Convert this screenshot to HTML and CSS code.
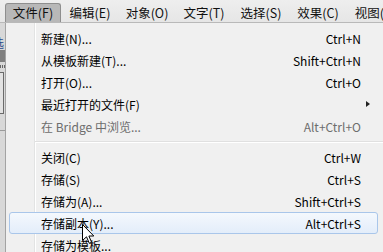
FILE: index.html
```html
<!DOCTYPE html>
<html lang="zh-CN">
<head>
<meta charset="utf-8">
<link rel="stylesheet" href="styles.css">
</head>
<body>
<div class="screen">
  <div class="menubar">
    <span class="mb-item active">文件(F)</span>
    <span class="mb-item">编辑(E)</span>
    <span class="mb-item">对象(O)</span>
    <span class="mb-item">文字(T)</span>
    <span class="mb-item">选择(S)</span>
    <span class="mb-item">效果(C)</span>
    <span class="mb-item">视图(V)</span>
  </div>
  <div class="below">
    <div class="strip">
      <div class="strip-glyph">选</div>
      <div class="strip-dark"></div>
      <div class="strip-dots"></div>
      <div class="strip-box"></div>
      <div class="strip-line"></div>
    </div>
    <div class="menu">
      <div class="row"><span class="label">新建(N)...</span><span class="key">Ctrl+N</span></div>
      <div class="row"><span class="label">从模板新建(T)...</span><span class="key">Shift+Ctrl+N</span></div>
      <div class="row"><span class="label">打开(O)...</span><span class="key">Ctrl+O</span></div>
      <div class="row"><span class="label">最近打开的文件(F)</span><span class="arrow"></span></div>
      <div class="row disabled"><span class="label">在 Bridge 中浏览...</span><span class="key">Alt+Ctrl+O</span></div>
      <div class="sep"></div>
      <div class="row"><span class="label">关闭(C)</span><span class="key">Ctrl+W</span></div>
      <div class="row"><span class="label">存储(S)</span><span class="key">Ctrl+S</span></div>
      <div class="row"><span class="label">存储为(A)...</span><span class="key">Shift+Ctrl+S</span></div>
      <div class="row hover"><span class="label">存储副本(Y)...</span><span class="key">Alt+Ctrl+S</span></div>
      <div class="row"><span class="label">存储为模板...</span><span class="key"></span></div>
    </div>
  </div>
  <svg class="cursor" width="14" height="22" viewBox="0 0 14 22">
    <path d="M0.5 0.5 L0.5 16.5 L4.5 12.8 L7.3 19.3 L9.6 18.3 L6.9 12 L11.8 12 Z" fill="#fff" stroke="#000" stroke-width="1" stroke-linejoin="miter"/>
  </svg>
</div>
</body>
</html>
```
FILE: styles.css
```css
html, body {
  margin: 0;
  padding: 0;
}
body {
  width: 383px;
  height: 252px;
  overflow: hidden;
  background: #f0f0f0;
  font-family: "Noto Sans CJK SC", "Microsoft YaHei", sans-serif;
  font-size: 12px;
  color: #000;
}
.screen {
  position: relative;
  width: 383px;
  height: 252px;
  overflow: hidden;
}
.menubar {
  height: 23px;
  box-sizing: border-box;
  display: flex;
  align-items: flex-end;
  padding-left: 5px;
  background: linear-gradient(#eeeeee, #e6e6e6);
  border-bottom: 1px solid #b9b9b9;
  white-space: nowrap;
}
.mb-item {
  height: 19px;
  line-height: 19px;
  margin-right: 1px;
  box-sizing: border-box;
  flex: none;
  width: 56px;
  text-align: center;
  color: #111;
  font-size: 12.5px;
}
.mb-item.active {
  background: #b8b8b8;
  border: 1px solid #8e8e8e;
  border-bottom: none;
  border-radius: 3px 3px 0 0;
  line-height: 18px;
}
.below {
  display: flex;
  height: 229px;
}
.strip {
  width: 5px;
  flex: none;
  background: #d8d8d8;
  border-right: 1px solid #a3a3a3;
  position: relative;
  overflow: hidden;
}
.strip-glyph {
  position: absolute;
  left: -8px;
  top: 11px;
  color: #2a4a8a;
  font-size: 12px;
}
.strip-dark {
  position: absolute;
  left: 0;
  top: 27px;
  width: 5px;
  height: 12px;
  background: #7f7f7f;
}
.strip-dots {
  position: absolute;
  left: 0;
  top: 42px;
  width: 5px;
  height: 3px;
  background: repeating-linear-gradient(90deg, #666 0 1px, #d8d8d8 1px 2px);
}
.strip-box {
  position: absolute;
  left: -4px;
  top: 49px;
  width: 6px;
  height: 40px;
  border: 1px solid #6a6a6a;
  background: #e2e2e2;
}
.strip-line {
  position: absolute;
  left: 0;
  top: 107px;
  width: 5px;
  height: 1px;
  background: #9a9a9a;
}
.menu {
  width: 380px;
  flex: none;
  padding-top: 4px;
  background-color: #f0f0f0;
  background-image: linear-gradient(90deg, transparent 28px, #e2e3e3 28px, #e2e3e3 29px, #ffffff 29px, #ffffff 30px, transparent 30px);
}
.row {
  position: relative;
  display: flex;
  justify-content: space-between;
  align-items: center;
  height: 22px;
  box-sizing: border-box;
  margin: 0 8px 0 3px;
  padding: 0 16px 0 31px;
  border: 1px solid transparent;
  border-radius: 3px;
  white-space: nowrap;
}
.row.disabled {
  color: #6d6d6d;
}
.row.hover {
  border-color: #a9c6ea;
  background: linear-gradient(#f4f8fd, #e3edfa);
}
.key {
  text-align: right;
}
.arrow {
  position: absolute;
  right: 7px;
  top: 7px;
  width: 0;
  height: 0;
  border-top: 3.5px solid transparent;
  border-bottom: 3.5px solid transparent;
  border-left: 4px solid #222;
}
.sep {
  height: 9px;
  box-sizing: border-box;
  margin-left: 29px;
  padding-top: 4px;
}
.sep::before {
  content: "";
  display: block;
  height: 1px;
  background: #e0e0e0;
  border-bottom: 1px solid #ffffff;
}
.cursor {
  position: absolute;
  left: 82px;
  top: 224px;
}
```
